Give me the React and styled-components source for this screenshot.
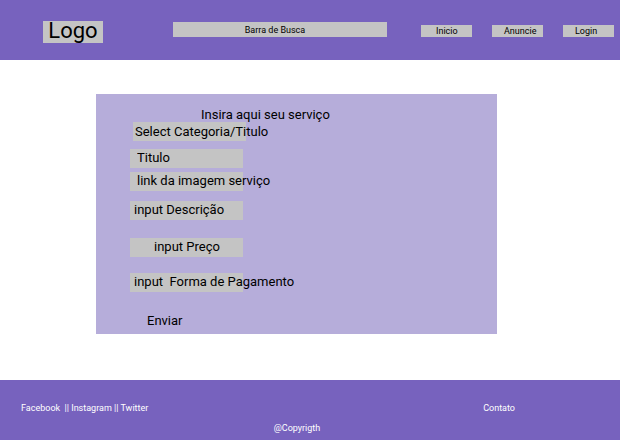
import React from "react";
import styled, { createGlobalStyle } from "styled-components";

const GlobalStyle = createGlobalStyle`
  *, *::before, *::after { box-sizing: border-box; }
  body { margin: 0; background: #fff; color: #000; font-family: Roboto, sans-serif; }
  input, select, button { font-family: inherit; color: inherit; }
`;

const Page = styled.div`
  min-height: 100vh;
  display: flex;
  flex-direction: column;
`;

const Header = styled.header`
  display: flex;
  align-items: flex-start;
  min-height: 60px;
  padding: 21px 6px 0 43px;
  background: #7762be;
`;

const Logo = styled.a`
  flex: none;
  width: 60px;
  padding-bottom: 2px;
  background: #c4c4c4;
  color: #000;
  font-size: 22px;
  line-height: 20px;
  text-align: center;
  text-decoration: none;
`;

const SearchInput = styled.input`
  flex: 1;
  min-width: 0;
  height: 15px;
  margin: 1px 34px 0 70px;
  padding: 0 10px 0 0;
  border: 0;
  border-radius: 0;
  background: #c4c4c4;
  font-size: 9px;
  text-align: center;
  &::placeholder { color: #000; opacity: 1; }
`;

const Nav = styled.nav`
  display: flex;
  gap: 20px;
  padding-top: 4px;
`;

const NavLink = styled.a`
  width: 51px;
  padding-left: ${(p) => p.$inset}px;
  background: #c4c4c4;
  color: #000;
  font-size: 9px;
  line-height: 12px;
  text-decoration: none;
`;

const Main = styled.main`
  flex: 1;
  padding: 34px 123px 46px 96px;
`;

const Form = styled.form`
  display: flex;
  flex-direction: column;
  align-items: flex-start;
  padding: 13px 34px 5px;
  background: #b6adda;
`;

const Title = styled.h1`
  margin: 0 0 0 71px;
  font-size: 13px;
  font-weight: 400;
  line-height: 15px;
`;

const fieldBox = `
  appearance: none;
  width: 180px;
  height: 19px;
  border: 0;
  border-radius: 0;
  background: linear-gradient(#c4c4c4, #c4c4c4) no-repeat 0 0 / 113px 100%;
  font-size: 13px;
`;

const CategorySelect = styled.select`
  ${fieldBox}
  margin: 0 0 8px 3px;
  padding: 0 0 0 2px;
`;

const Field = styled.input`
  ${fieldBox}
  margin: 0 0 ${(p) => p.$gap}px;
  padding: 0 0 2px ${(p) => p.$inset}px;
  &::placeholder { color: #000; opacity: 1; }
`;

const SubmitButton = styled.button`
  margin-left: 17px;
  padding: 0;
  border: 0;
  background: none;
  font-size: 13px;
  line-height: 16px;
`;

const Footer = styled.footer`
  min-height: 60px;
  padding: 22px 105px 6px 21px;
  background: #7762be;
  color: #fff;
  font-size: 9px;
  line-height: 12px;
`;

const FooterRow = styled.div`
  display: flex;
  justify-content: space-between;
`;

const Social = styled.div`
  white-space: pre;
`;

const FooterLink = styled.a`
  color: inherit;
  text-decoration: none;
`;

const Copyright = styled.p`
  margin: 8px 0 0 58px;
  text-align: center;
`;

const navItems = [
  { text: "Inicio", inset: 15 },
  { text: "Anuncie", inset: 12 },
  { text: "Login", inset: 12 },
];

const fields = [
  { name: "titulo", text: "Titulo", inset: 7, gap: 4 },
  { name: "imagem", text: "link da imagem serviço", inset: 7, gap: 10 },
  { name: "descricao", text: "input Descrição", inset: 4, gap: 18 },
  { name: "preco", text: "input Preço", inset: 24, gap: 16 },
  { name: "pagamento", text: "input  Forma de Pagamento", inset: 4, gap: 21 },
];

export default function App() {
  return (
    <Page>
      <GlobalStyle />
      <Header>
        <Logo href="#">Logo</Logo>
        <SearchInput type="text" aria-label="Barra de Busca" placeholder="Barra de Busca" />
        <Nav>
          {navItems.map((item) => (
            <NavLink key={item.text} href="#" $inset={item.inset}>
              {item.text}
            </NavLink>
          ))}
        </Nav>
      </Header>
      <Main>
        <Form onSubmit={(e) => e.preventDefault()}>
          <Title>Insira aqui seu serviço</Title>
          <CategorySelect name="categoria" aria-label="Select Categoria/Titulo">
            <option>Select Categoria/Titulo</option>
          </CategorySelect>
          {fields.map((f) => (
            <Field
              key={f.name}
              type="text"
              name={f.name}
              aria-label={f.text}
              placeholder={f.text}
              $inset={f.inset}
              $gap={f.gap}
            />
          ))}
          <SubmitButton type="submit">Enviar</SubmitButton>
        </Form>
      </Main>
      <Footer>
        <FooterRow>
          <Social>
            <FooterLink href="#">Facebook</FooterLink>
            {"  || "}
            <FooterLink href="#">Instagram</FooterLink>
            {" || "}
            <FooterLink href="#">Twitter</FooterLink>
          </Social>
          <FooterLink href="#">Contato</FooterLink>
        </FooterRow>
        <Copyright>@Copyrigth</Copyright>
      </Footer>
    </Page>
  );
}
